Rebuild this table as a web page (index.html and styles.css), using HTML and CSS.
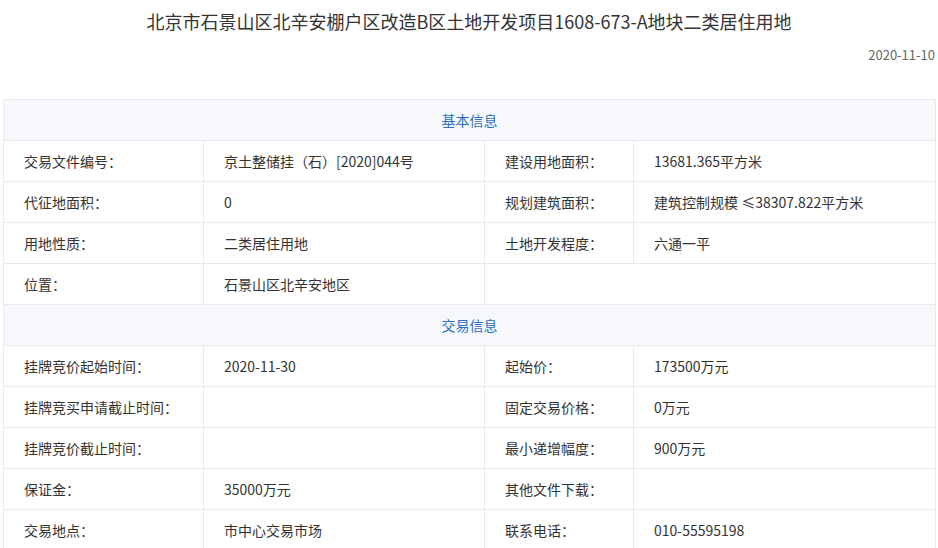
FILE: index.html
```html
<!DOCTYPE html>
<html lang="zh">
<head>
<meta charset="utf-8">
<link rel="stylesheet" href="styles.css">
</head>
<body>
<div class="page">
  <h1 class="title">北京市石景山区北辛安棚户区改造B区土地开发项目1608-673-A地块二类居住用地</h1>
  <div class="date">2020-11-10</div>
  <table class="info">
    <colgroup>
      <col class="c1"><col class="c2"><col class="c3"><col class="c4">
    </colgroup>
    <tr class="head"><td colspan="4">基本信息</td></tr>
    <tr><td>交易文件编号：</td><td>京土整储挂（石）[2020]044号</td><td>建设用地面积：</td><td>13681.365平方米</td></tr>
    <tr><td>代征地面积：</td><td>0</td><td>规划建筑面积：</td><td>建筑控制规模 ≤38307.822平方米</td></tr>
    <tr><td>用地性质：</td><td>二类居住用地</td><td>土地开发程度：</td><td>六通一平</td></tr>
    <tr><td>位置：</td><td>石景山区北辛安地区</td><td colspan="2" class="blank"></td></tr>
    <tr class="head"><td colspan="4">交易信息</td></tr>
    <tr><td>挂牌竞价起始时间：</td><td>2020-11-30</td><td>起始价：</td><td>173500万元</td></tr>
    <tr><td>挂牌竞买申请截止时间：</td><td></td><td>固定交易价格：</td><td>0万元</td></tr>
    <tr><td>挂牌竞价截止时间：</td><td></td><td>最小递增幅度：</td><td>900万元</td></tr>
    <tr><td>保证金：</td><td>35000万元</td><td>其他文件下载：</td><td></td></tr>
    <tr><td>交易地点：</td><td>市中心交易市场</td><td>联系电话：</td><td>010-55595198</td></tr>
  </table>
</div>
</body>
</html>
```
FILE: styles.css
```css
html, body {
  margin: 0;
  padding: 0;
  background: #fff;
}
body {
  font-family: "Microsoft YaHei", "Noto Sans CJK SC", "Noto Sans", sans-serif;
  color: #333;
}
.page {
  padding: 0 3px 0 3px;
}
.title {
  margin: 9px 0 0;
  font-size: 18px;
  line-height: 24px;
  font-weight: normal;
  text-align: center;
  color: #333;
}
.date {
  margin-top: 13px;
  font-size: 13px;
  line-height: 18px;
  text-align: right;
  color: #666;
}
.info {
  margin-top: 35px;
  width: 932px;
  border-collapse: collapse;
  table-layout: fixed;
  font-size: 14px;
}
.c1 { width: 200px; }
.c2 { width: 281px; }
.c3 { width: 149px; }
.c4 { width: 302px; }
.info td {
  border: 1px solid #e8eaee;
  height: 41px;
  padding: 0 0 0 20px;
  line-height: 20px;
  vertical-align: middle;
  color: #333;
  box-sizing: border-box;
}
.info tr.head td {
  background: #f6f8fc;
  color: #2a6fc0;
  text-align: center;
  padding: 0;
}
```
